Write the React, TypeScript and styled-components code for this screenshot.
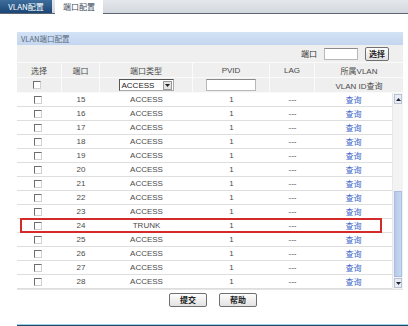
import React from "react";
import styled, { createGlobalStyle } from "styled-components";

const Global = createGlobalStyle`
  html, body { margin: 0; padding: 0; background: #fff; }
  body { width: 408px; height: 326px; overflow: hidden; font-family: "Liberation Sans", Arial, "Noto Sans CJK SC", sans-serif; }
  * { box-sizing: border-box; }
`;

const TabBar = styled.div`
  display: flex;
  align-items: flex-end;
  height: 14px;
  background: linear-gradient(#e4e8ec, #d3d8de);
  border-bottom: 1px solid #5b6570;
`;

const Tab = styled.div<{ $active?: boolean }>`
  height: ${(p) => (p.$active ? 14 : 13)}px;
  width: ${(p) => (p.$active ? 48 : 52)}px;
  margin-left: ${(p) => (p.$active ? 3 : 0)}px;
  margin-bottom: ${(p) => (p.$active ? -1 : 0)}px;
  background: ${(p) => (p.$active ? "#fff" : "linear-gradient(#3d6d9c, #1b4675)")};
  color: ${(p) => (p.$active ? "#3b4a5c" : "#fff")};
  font-size: 8px;
  line-height: 13px;
  text-align: center;
  font-family: "Noto Sans CJK SC", "Liberation Sans", sans-serif;
`;

const Panel = styled.div`
  margin: 18px 5px 0 17px;
  width: 386px;
`;

const PanelHeader = styled.div`
  height: 13px;
  background: linear-gradient(#d3e2f5, #c3d6ef);
  color: #5a6a80;
  font-size: 7.5px;
  line-height: 13px;
  padding-left: 4px;
  font-family: "Noto Sans CJK SC", "Liberation Sans", sans-serif;
`;

const GrayBody = styled.div`
  background: #efefef;
`;

const SearchRow = styled.div`
  display: flex;
  justify-content: flex-end;
  align-items: center;
  height: 17px;
  padding-right: 14px;
  gap: 7px;
  font-size: 8px;
  color: #333;
  font-family: "Noto Sans CJK SC", "Liberation Sans", sans-serif;
`;

const TextBox = styled.div<{ $w: number }>`
  width: ${(p) => p.$w}px;
  height: 12px;
  background: #fff;
  border: 1px solid #b8b8b8;
  border-top-color: #8a8a8a;
`;

const Btn = styled.div<{ $w: number }>`
  width: ${(p) => p.$w}px;
  height: 14px;
  border: 1px solid #707070;
  border-radius: 2px;
  background: linear-gradient(#fdfdfd, #e2e2e2);
  font-size: 8px;
  line-height: 12px;
  text-align: center;
  color: #222;
  font-weight: bold;
  font-family: "Noto Sans CJK SC", "Liberation Sans", sans-serif;
`;

const cols = "45px 38px 93px 77px 45px 1fr";

const HeadRow = styled.div`
  display: grid;
  grid-template-columns: ${cols};
  height: 16px;
  align-items: center;
  border-top: 1px solid #fafafa;
  border-bottom: 1px solid #fafafa;
`;

const HeadCell = styled.div<{ $line?: boolean }>`
  height: 100%;
  display: flex;
  align-items: center;
  justify-content: center;
  font-size: 8px;
  color: #4a4a4a;
  border-right: ${(p) => (p.$line ? "1px solid #fbfbfb" : "none")};
  font-family: "Liberation Sans", "Noto Sans CJK SC", sans-serif;
`;

const FilterRow = styled(HeadRow)`
  height: 15px;
  border-top: none;
`;

const Select = styled.div`
  display: flex;
  width: 55px;
  height: 12px;
  background: #fff;
  border: 1px solid #555;
  border-right-color: #aaa;
  border-bottom-color: #aaa;
  font-size: 8px;
  color: #222;
  align-items: center;
  padding-left: 2px;
  justify-content: space-between;
`;

const DropBtn = styled.div`
  width: 9px;
  height: 9px;
  margin-right: 1px;
  background: #e4e4e4;
  border: 1px solid #999;
  display: flex;
  align-items: center;
  justify-content: center;
`;

const DataArea = styled.div`
  display: flex;
  background: #fff;
  border-bottom: 1px solid #e4e4e4;
`;

const Rows = styled.div`
  flex: 1;
`;

const DataRow = styled.div`
  position: relative;
  display: grid;
  grid-template-columns: 45px 38px 93px 77px 45px 1fr;
  height: 14px;
  align-items: center;
  border-bottom: 1px solid #dedede;
  font-size: 8px;
  color: #4a4a4a;
`;

const Cell = styled.div`
  text-align: center;
  display: flex;
  justify-content: center;
  align-items: center;
`;

const Link = styled.span`
  color: #3a62c8;
  font-family: "Noto Sans CJK SC", sans-serif;
  font-size: 8px;
`;

const Check = styled.span`
  display: inline-block;
  width: 8px;
  height: 8px;
  margin-left: -4px;
  background: #fff;
  border: 1px solid;
  border-color: #6e6e6e #d0d0d0 #d0d0d0 #6e6e6e;
`;

const Highlight = styled.div`
  position: absolute;
  left: 3px;
  top: -1px;
  width: 362px;
  height: 15px;
  border: 2px solid #d42a2a;
  pointer-events: none;
`;

const Scrollbar = styled.div`
  width: 11px;
  display: flex;
  flex-direction: column;
  background: #f3f3f3;
  border-left: 1px solid #e8e8e8;
`;

const ScrollBtn = styled.div`
  height: 10px;
  margin: 1px;
  border: 1px solid #b7c3d4;
  background: #e8edf5;
  display: flex;
  align-items: center;
  justify-content: center;
`;

const Track = styled.div`
  flex: 1;
  display: flex;
  flex-direction: column;
  justify-content: flex-end;
`;

const Thumb = styled.div`
  height: 86px;
  margin: 0 1px;
  background: linear-gradient(90deg, #b5c9e8, #c8d8f0);
  border: 1px solid #a9bde0;
`;

const Footer = styled.div`
  display: flex;
  justify-content: center;
  gap: 12px;
  padding-top: 3px;
  padding-left: 6px;
  height: 34px;
`;

const BottomBar = styled.div`
  margin-left: 17px;
  height: 4px;
  border-top: 1px solid #9fd0ea;
  background: #1f4a66;
`;

const rows = Array.from({ length: 14 }, (_, i) => i + 15);

export default function App() {
  return (
    <>
      <Global />
      <TabBar>
        <Tab>VLAN配置</Tab>
        <Tab $active>端口配置</Tab>
      </TabBar>
      <Panel>
        <PanelHeader>VLAN端口配置</PanelHeader>
        <GrayBody>
          <SearchRow>
            <span>端口</span>
            <TextBox $w={34} />
            <Btn $w={24}>选择</Btn>
          </SearchRow>
          <HeadRow>
            <HeadCell $line>选择</HeadCell>
            <HeadCell $line>端口</HeadCell>
            <HeadCell $line>端口类型</HeadCell>
            <HeadCell $line>PVID</HeadCell>
            <HeadCell $line>LAG</HeadCell>
            <HeadCell>所属VLAN</HeadCell>
          </HeadRow>
          <FilterRow>
            <HeadCell $line><Check /></HeadCell>
            <HeadCell $line />
            <HeadCell $line>
              <Select>
                ACCESS
                <DropBtn>
                  <svg width="5" height="3" viewBox="0 0 5 3"><path d="M0 0h5L2.5 3z" fill="#222" /></svg>
                </DropBtn>
              </Select>
            </HeadCell>
            <HeadCell $line><TextBox $w={50} /></HeadCell>
            <HeadCell $line />
            <HeadCell>VLAN ID查询</HeadCell>
          </FilterRow>
        </GrayBody>
        <DataArea>
          <Rows>
            {rows.map((n) => (
              <DataRow key={n}>
                <Cell><Check /></Cell>
                <Cell>{n}</Cell>
                <Cell>{n === 24 ? "TRUNK" : "ACCESS"}</Cell>
                <Cell>1</Cell>
                <Cell>---</Cell>
                <Cell><Link>查询</Link></Cell>
                {n === 24 && <Highlight />}
              </DataRow>
            ))}
          </Rows>
          <Scrollbar>
            <ScrollBtn>
              <svg width="5" height="3" viewBox="0 0 5 3"><path d="M0 3h5L2.5 0z" fill="#223" /></svg>
            </ScrollBtn>
            <Track>
              <Thumb />
            </Track>
            <ScrollBtn>
              <svg width="5" height="3" viewBox="0 0 5 3"><path d="M0 0h5L2.5 3z" fill="#223" /></svg>
            </ScrollBtn>
          </Scrollbar>
        </DataArea>
        <Footer>
          <Btn $w={38}>提交</Btn>
          <Btn $w={38}>帮助</Btn>
        </Footer>
      </Panel>
      <BottomBar />
    </>
  );
}
